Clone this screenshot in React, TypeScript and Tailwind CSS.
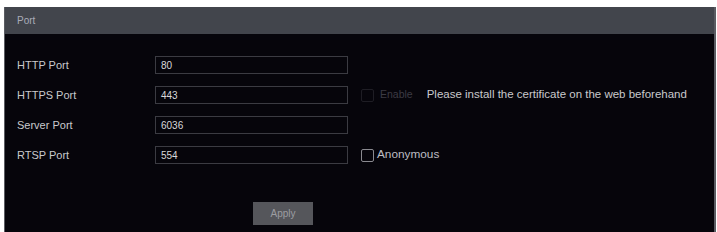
const rows = [
  { label: 'HTTP Port', value: '80' },
  { label: 'HTTPS Port', value: '443', extra: 'https' },
  { label: 'Server Port', value: '6036' },
  { label: 'RTSP Port', value: '554', extra: 'rtsp' },
];

function Box({ dim }: { dim?: boolean }) {
  return (
    <span
      className={`inline-block h-[13px] w-[13px] rounded-[2px] border ${
        dim ? 'border-[#1e1d24]' : 'border-[#8a8a90]'
      }`}
    />
  );
}

export default function App() {
  return (
    <div
      className="h-[232px] w-[717px] bg-white pt-[7px] pl-[4px] pr-[1px]"
      style={{ fontFamily: '"Liberation Sans", Arial, sans-serif' }}
    >
      <div className="flex h-[225px] flex-col border-l border-r-2 border-[#5a5c62] bg-[#06050b]">
        <div className="flex h-[27px] items-center bg-[#42454c] px-[12px] text-[10px] text-[#a9acb8]">
          Port
        </div>
        <div className="flex flex-col pt-[22px]">
          {rows.map((r) => (
            <div key={r.label} className="mb-[12px] flex h-[18px] items-center">
              <div className="w-[150px] pl-[12px] text-[11px] text-[#c9c9cc]">{r.label}</div>
              <div className="flex h-[18px] w-[193px] items-center border border-[#3b3b42] px-[5px] text-[10px] text-[#d8d8da]">
                {r.value}
              </div>
              {r.extra === 'https' && (
                <div className="ml-[13px] flex items-center">
                  <Box dim />
                  <span className="ml-[6px] text-[10.5px] text-[#3c3b44]">Enable</span>
                  <span className="ml-[14px] text-[11.5px] text-[#c9c9cc]">
                    Please install the certificate on the web beforehand
                  </span>
                </div>
              )}
              {r.extra === 'rtsp' && (
                <div className="ml-[13px] flex items-center text-[11.8px] text-[#bdbdc2]">
                  <Box />
                  <span className="ml-[3px]">Anonymous</span>
                </div>
              )}
            </div>
          ))}
          <div className="mt-[26px] flex pl-[248px]">
            <button className="h-[23px] w-[60px] bg-[#55565b] text-[10px] text-[#9c9da2]">
              Apply
            </button>
          </div>
        </div>
      </div>
    </div>
  );
}
